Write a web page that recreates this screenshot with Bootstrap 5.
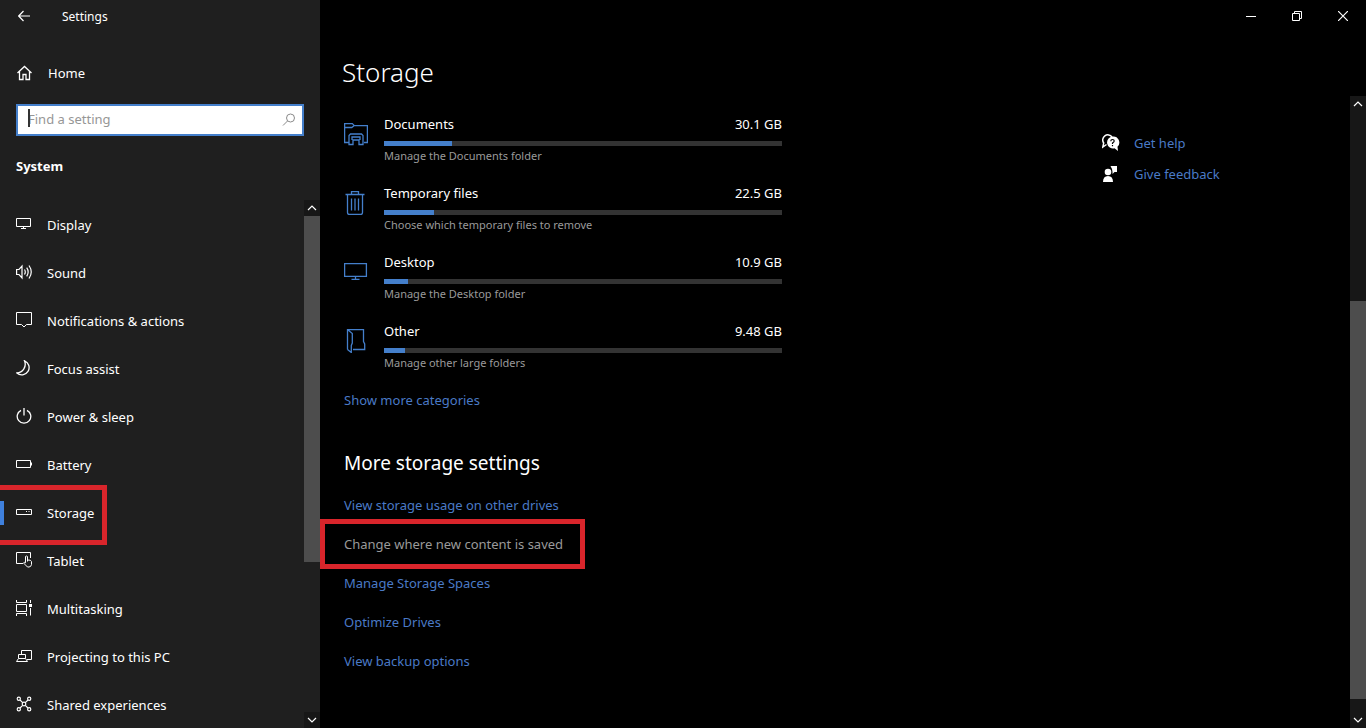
<!DOCTYPE html>
<html lang="en">
<head>
<meta charset="utf-8">
<meta name="viewport" content="width=device-width, initial-scale=1">
<title>Settings</title>
<link href="https://cdn.jsdelivr.net/npm/bootstrap@5.3.0/dist/css/bootstrap.min.css" rel="stylesheet">
<style>
:root { --accent: #447fcb; --link: #4a7ac6; --pane: #1f1f1f; --alert: #d9252b; }
body { background: #000; color: #fff; font-family: "Noto Sans", "Open Sans", sans-serif; font-size: 13px; line-height: 20px; }
svg { display: block; flex: none; fill: none; stroke: currentColor; }
button { color: inherit; background: none; border: 0; padding: 0; }
a { color: var(--link); text-decoration: none; }
.side-pane { flex: 0 0 320px; background: var(--pane); }
.title-row { height: 32px; font-size: 12px; }
.app-name { padding: 2px 0 0 14px; }
.back-btn { width: 48px; height: 32px; }
.home-link { height: 48px; gap: 15px; margin-top: 17px; }
.search-box { margin: 7px 16px 0; }
.search-box input { height: 32px; border: 2px solid var(--accent); border-radius: 0; background: #fff; font-size: 13px; line-height: 20px; padding: 0 32px 2px 10px; }
.search-box input:focus { border-color: var(--accent); box-shadow: none; background: #fff; }
.search-box input::placeholder { color: #969696; opacity: 1; }
.search-box svg { position: absolute; right: 8px; top: 9px; color: #8a8a8a; }
.text-caret { position: absolute; left: 12px; top: 5px; width: 2px; height: 18px; background: #333; }
.group-name { font-size: 13px; font-weight: 700; margin: 20px 16px 24px; line-height: 20px; }
.side-list { padding-top: 1px; }
.side-list a { color: #fff; height: 48px; gap: 15px; padding: 0 16px; }
.side-list svg { margin-bottom: 2px; }
.side-list .current::before { content: ""; position: absolute; left: 0; top: 12px; width: 4px; height: 24px; background: #3f80dc; }
.marked::after { content: ""; position: absolute; border: 5px solid var(--alert); z-index: 2; pointer-events: none; }
.side-list .marked::after { left: 0; width: 107px; top: -4px; bottom: -8px; border-left: 0; }
.more-links .marked::after { left: -24px; right: -22px; top: -15px; bottom: -15px; }
.scroll-col { flex: 0 0 16px; background: #171717; }
.side-pane .scroll-col { background: var(--pane); }
.scroll-col button { height: 16px; flex: none; background: #171717; }
.scroll-thumb { background: #4d4d4d; }
.side-pane .scroll-thumb { flex: 346 0 0; }
.side-pane .space-after { flex: 150 0 0; }
.main-pane .space-before { flex: 189 0 0; }
.main-pane .scroll-thumb { flex: 398 0 0; }
.main-pane .space-after { flex: 13 0 0; }
.win-btn { width: 46px; height: 32px; }
.page-title { font-size: 26px; line-height: 36px; font-weight: 300; margin: 22px 0 6px 22px; }
.page-body { padding: 18px 24px 0; }
.usage-list { max-width: 438px; gap: 19px; }
.usage-row { gap: 16px; }
.usage-row > svg { color: var(--accent); margin-top: 8px; }
.usage-bar { height: 5px; border-radius: 0; background: #333; margin: 7px 0 2px; }
.usage-bar .progress-bar { background: #447fcb; }
.usage-note { font-size: 11px; line-height: 16px; color: #9a9a9a; }
.more-title { font-size: 19px; line-height: 28px; font-weight: 400; margin: 39px 0 18px; }
.more-links { gap: 19px; }
.more-links .marked { color: #9a9a9a; }
.help-col { flex: 0 0 248px; padding-top: 37px; gap: 11px; }
.help-col a { gap: 14px; }
.help-col svg { color: #fff; }
</style>
</head>
<body>
<div class="d-flex vh-100 overflow-hidden">
  <aside class="side-pane d-flex flex-column">
    <div class="title-row d-flex align-items-center">
      <button class="back-btn d-flex align-items-center justify-content-center" aria-label="Back"><svg width="12" height="12" viewBox="0 0 12 12" stroke-width="1.2"><path d="M12 6H.8M5.5 1 .7 6l4.8 5"/></svg></button>
      <span class="app-name">Settings</span>
    </div>
    <a class="home-link d-flex align-items-center px-3 text-white" href="#"><svg width="17" height="16" viewBox="0 0 17 16" stroke-width="1.3"><path d="m1.5 8 7-6.5 7 6.5M3.5 6.5v8H7v-5h3v5h3.5v-8"/></svg>Home</a>
    <div class="search-box position-relative">
      <input class="form-control" type="text" placeholder="Find a setting" aria-label="Find a setting">
      <span class="text-caret"></span>
      <svg width="14" height="14" viewBox="0 0 14 14"><circle cx="8.5" cy="5" r="4"/><path d="M5.5 8 1 12.5"/></svg>
    </div>
    <h2 class="group-name">System</h2>
    <div class="d-flex flex-grow-1 overflow-hidden">
      <nav class="side-list flex-grow-1 overflow-hidden">
        <a class="d-flex align-items-center" href="#"><svg width="16" height="16" viewBox="0 0 16 16"><path d="M.5 2.500h14v8H.5zM7.500 10.500v2M5 12.500h5"/></svg>Display</a>
        <a class="d-flex align-items-center" href="#"><svg width="16" height="16" viewBox="0 0 16 16" stroke-width="1.2"><path d="M.6 5.500H3l3-3.500v12l-3-3.500H.6zM8.500 5.500q1.600 2.500 0 5M10.700 3.700q2.900 4.300 0 8.600M13 1.500q4.500 6.500 0 13"/></svg>Sound</a>
        <a class="d-flex align-items-center" href="#"><svg width="16" height="16" viewBox="0 0 16 16"><path d="M.5.5h15v12h-5L8 15l-2.500-2.500h-5z"/></svg>Notifications &amp; actions</a>
        <a class="d-flex align-items-center" href="#"><svg width="16" height="16" viewBox="0 0 16 16" stroke-width="1.3"><path d="M8.500.8A7.300 7.300 0 1 1 .9 13C6.500 12.500 11 7 8.500.8z"/></svg>Focus assist</a>
        <a class="d-flex align-items-center" href="#"><svg width="16" height="16" viewBox="0 0 16 16" stroke-width="1.3"><path d="M5 2.300a6.800 6.800 0 1 0 6 0M8 0v7.500"/></svg>Power &amp; sleep</a>
        <a class="d-flex align-items-center" href="#"><svg width="16" height="16" viewBox="0 0 16 16"><path d="M.5 4.500h14v7H.5zM15.500 6.500v3"/></svg>Battery</a>
        <a class="d-flex align-items-center position-relative current marked" href="#" aria-current="page"><svg width="16" height="16" viewBox="0 0 16 16"><path d="M.5 5.500h15v5H.5zM10 7.500h1M12.500 7.500h1"/></svg>Storage</a>
        <a class="d-flex align-items-center" href="#"><svg width="16" height="16" viewBox="0 0 16 16"><path d="M7 11.500H.5v-11h14V6M9.500 10.800V4.500q1-1 2 0V8q3.600-.3 4 1.500v3Q15 15 13 15h-1.500L7.500 11q.5-1.500 2-.2zM11.500 8v1.500"/></svg>Tablet</a>
        <a class="d-flex align-items-center" href="#"><svg width="16" height="16" viewBox="0 0 16 16"><path d="M.5 4.500h10v7H.5zM.5 0v2.500h10V0M.5 16v-2.500h10V16M14.500 0v3M14.500 8v7.500"/><path stroke="none" fill="currentColor" d="M13 4h3v3h-3z"/></svg>Multitasking</a>
        <a class="d-flex align-items-center" href="#"><svg width="16" height="16" viewBox="0 0 16 16"><path d="M5.500 6V2.500h10v9H11M2.500 6.500h7v4h-7zM2.500 10.500l-2 3h11l-2-3"/></svg>Projecting to this PC</a>
        <a class="d-flex align-items-center" href="#"><svg width="16" height="16" viewBox="0 0 16 16" stroke-width="1.2"><circle cx="8" cy="8" r="1.800"/><circle cx="2.800" cy="2.800" r="1.600"/><circle cx="13.200" cy="2.800" r="1.600"/><circle cx="2.800" cy="13.200" r="1.600"/><circle cx="13.200" cy="13.200" r="1.600"/><path d="m4 4 2.700 2.700M12 4 9.300 6.700M4 12l2.700-2.700M12 12 9.300 9.300"/></svg>Shared experiences</a>
      </nav>
      <div class="scroll-col d-flex flex-column">
        <button class="d-flex align-items-center justify-content-center" aria-label="Scroll up"><svg width="10" height="6" viewBox="0 0 10 6" stroke-width="1.2"><path d="m1 5 4-4 4 4"/></svg></button>
        <div class="scroll-thumb"></div>
        <div class="space-after"></div>
        <button class="d-flex align-items-center justify-content-center" aria-label="Scroll down"><svg width="10" height="6" viewBox="0 0 10 6" stroke-width="1.2"><path d="m1 1 4 4 4-4"/></svg></button>
      </div>
    </div>
  </aside>

  <main class="main-pane d-flex flex-column flex-grow-1">
    <div class="title-row d-flex justify-content-end">
      <button class="win-btn d-flex align-items-center justify-content-center" aria-label="Minimize"><svg width="10" height="10" viewBox="0 0 10 10"><path d="M0 5.500h10"/></svg></button>
      <button class="win-btn d-flex align-items-center justify-content-center" aria-label="Restore"><svg width="10" height="10" viewBox="0 0 10 10"><path d="M.5 2.500h7v7h-7zM2.500 2.500v-2h7v7h-2"/></svg></button>
      <button class="win-btn d-flex align-items-center justify-content-center" aria-label="Close"><svg width="10" height="10" viewBox="0 0 10 10" stroke-width="1.2"><path d="m0 0 10 10M10 0 0 10"/></svg></button>
    </div>
    <h1 class="page-title">Storage</h1>
    <div class="d-flex flex-grow-1 overflow-hidden">
      <section class="page-body flex-grow-1">
        <div class="usage-list d-flex flex-column">
          <div class="usage-row d-flex">
            <svg width="24" height="24" viewBox="0 0 24 24" stroke-width="1.3"><path d="M5 20.500H.6V1.600h7.700l2 2h13.100v16.900H20M.6 5.500h7.200l2.500-1.900M5 22.500v-9L6.500 12h11l1.500 1.500v9h-4V18H9v4.500zM8 18v-3h8v3"/></svg>
            <div class="flex-grow-1">
              <div class="d-flex justify-content-between"><span>Documents</span><span>30.1 GB</span></div>
              <div class="progress usage-bar"><div class="progress-bar" style="width:17%"></div></div>
              <div class="usage-note">Manage the Documents folder</div>
            </div>
          </div>
          <div class="usage-row d-flex">
            <svg width="24" height="24" viewBox="0 0 24 24" stroke-width="1.3"><path d="M1.500 3.500h19M7.500 3.500v-3h7v3M3.500 3.500v18q0 2 2 2h11q2 0 2-2v-18M7.500 7.500v12M11 7.500v12M14.500 7.500v12"/></svg>
            <div class="flex-grow-1">
              <div class="d-flex justify-content-between"><span>Temporary files</span><span>22.5 GB</span></div>
              <div class="progress usage-bar"><div class="progress-bar" style="width:12.6%"></div></div>
              <div class="usage-note">Choose which temporary files to remove</div>
            </div>
          </div>
          <div class="usage-row d-flex">
            <svg width="24" height="24" viewBox="0 0 24 24" stroke-width="1.3"><path d="M.6 3.600h21.800v12.800H.6zM11.500 16.400V19M7.500 19.400h8"/></svg>
            <div class="flex-grow-1">
              <div class="d-flex justify-content-between"><span>Desktop</span><span>10.9 GB</span></div>
              <div class="progress usage-bar"><div class="progress-bar" style="width:6%"></div></div>
              <div class="usage-note">Manage the Desktop folder</div>
            </div>
          </div>
          <div class="usage-row d-flex">
            <svg width="24" height="24" viewBox="0 0 24 24" stroke-width="1.3"><path d="M3.500 20.500V.6h16v12l1.200 2.400v5.500H9M3.500.6l4.800 3.900V14l-1 2.500v7l-3.800-3"/></svg>
            <div class="flex-grow-1">
              <div class="d-flex justify-content-between"><span>Other</span><span>9.48 GB</span></div>
              <div class="progress usage-bar"><div class="progress-bar" style="width:5.3%"></div></div>
              <div class="usage-note">Manage other large folders</div>
            </div>
          </div>
          <a href="#">Show more categories</a>
        </div>
        <h2 class="more-title">More storage settings</h2>
        <div class="more-links d-flex flex-column align-items-start">
          <a href="#">View storage usage on other drives</a>
          <a class="position-relative marked" href="#">Change where new content is saved</a>
          <a href="#">Manage Storage Spaces</a>
          <a href="#">Optimize Drives</a>
          <a href="#">View backup options</a>
        </div>
      </section>
      <aside class="help-col d-flex flex-column">
        <a class="d-flex align-items-center" href="#"><svg width="18" height="18" viewBox="0 0 18 18"><path stroke-width="1.5" d="M4.500 10.500.8 13l.9-4A4.800 4.800 0 1 1 10 3"/><path stroke="none" fill="currentColor" d="M10.500 2.500a6 6 0 1 0 2 11.800l3.500 2.700-.5-4.300a6 6 0 0 0-5-10.200z"/><path stroke="#000" stroke-width="1.2" d="M8.800 7.200q0-1.700 1.700-1.700t1.700 1.600q0 1-1.700 2v1M10.500 11v1.300"/></svg>Get help</a>
        <a class="d-flex align-items-center" href="#"><svg width="18" height="18" viewBox="0 0 18 18"><g stroke="none" fill="currentColor"><circle cx="6" cy="7" r="3.300"/><path d="M1 17q0-6 5-6t5 6zM8.500 1H15v6h-2.500l-2 2V7L10 4z"/></g></svg>Give feedback</a>
      </aside>
      <div class="scroll-col d-flex flex-column">
        <button class="d-flex align-items-center justify-content-center" aria-label="Scroll up"><svg width="10" height="6" viewBox="0 0 10 6" stroke-width="1.2"><path d="m1 5 4-4 4 4"/></svg></button>
        <div class="space-before"></div>
        <div class="scroll-thumb"></div>
        <div class="space-after"></div>
        <button class="d-flex align-items-center justify-content-center" aria-label="Scroll down"><svg width="10" height="6" viewBox="0 0 10 6" stroke-width="1.2"><path d="m1 1 4 4 4-4"/></svg></button>
      </div>
    </div>
  </main>
</div>
<script src="https://cdn.jsdelivr.net/npm/bootstrap@5.3.0/dist/js/bootstrap.bundle.min.js"></script>
</body>
</html>
